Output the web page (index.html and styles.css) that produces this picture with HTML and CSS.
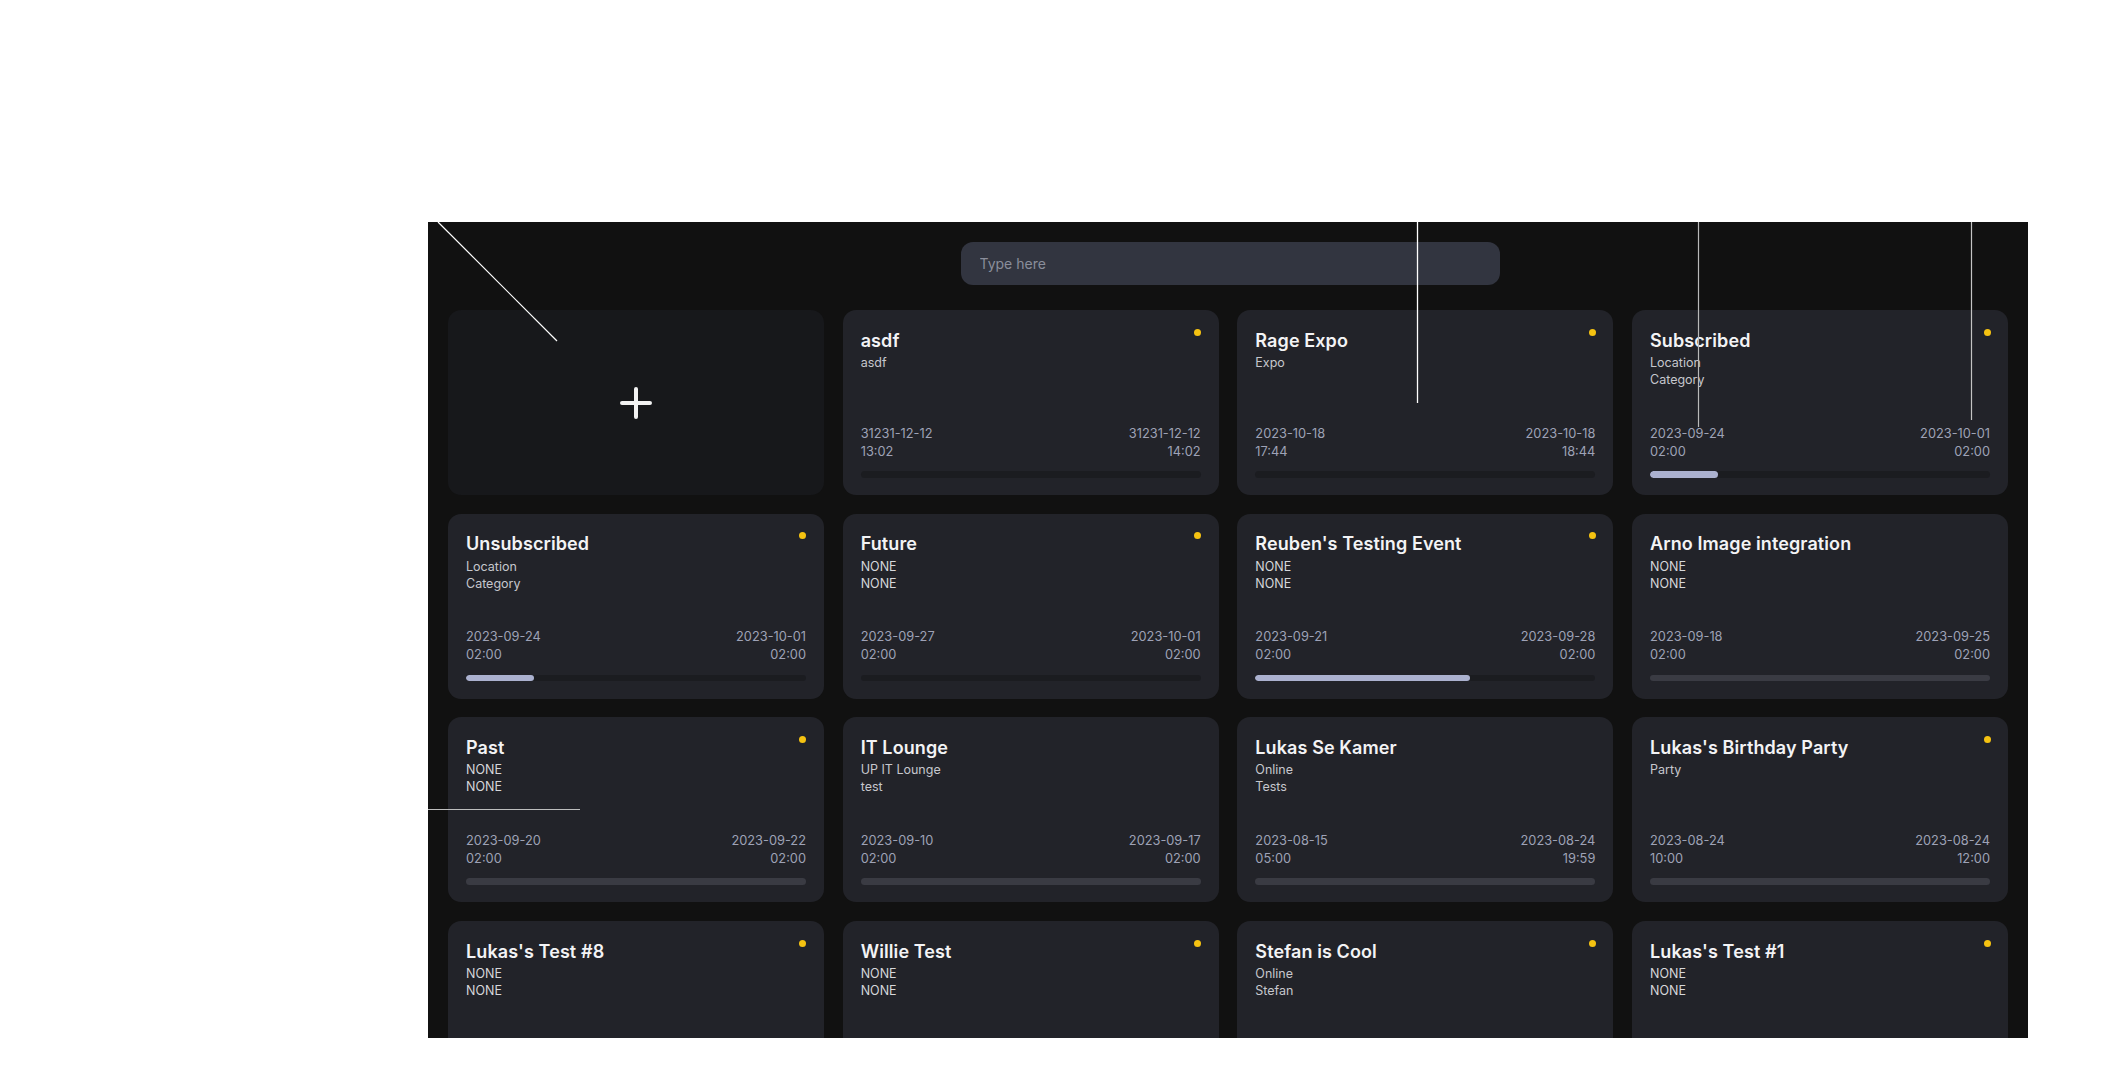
FILE: index.html
```html
<!DOCTYPE html>
<html lang="en">
<head>
<meta charset="utf-8">
<title>Events</title>
<link rel="stylesheet" href="styles.css">
</head>
<body>
<div class="page">
  <main class="panel">
    <div class="search-row">
      <input class="search" type="text" placeholder="Type here">
    </div>
    <section class="grid">
      <div class="card add-card">
        <svg class="plus" width="32" height="32" viewBox="0 0 32 32"><path d="M16 2v28M2 16h28" stroke="#f2f2f2" stroke-width="4" stroke-linecap="round" fill="none"/></svg>
      </div>

      <div class="card">
        <span class="dot"></span>
        <h3 class="title">asdf</h3>
        <div class="sub">asdf</div>
        <div class="spacer"></div>
        <div class="dates"><div>31231-12-12<br>13:02</div><div class="end">31231-12-12<br>14:02</div></div>
        <div class="bar"><div class="fill" style="width:0%"></div></div>
      </div>

      <div class="card">
        <span class="dot"></span>
        <h3 class="title">Rage Expo</h3>
        <div class="sub">Expo</div>
        <div class="spacer"></div>
        <div class="dates"><div>2023-10-18<br>17:44</div><div class="end">2023-10-18<br>18:44</div></div>
        <div class="bar"><div class="fill" style="width:0%"></div></div>
      </div>

      <div class="card">
        <span class="dot"></span>
        <h3 class="title">Subscribed</h3>
        <div class="sub">Location</div>
        <div class="sub">Category</div>
        <div class="spacer"></div>
        <div class="dates"><div>2023-09-24<br>02:00</div><div class="end">2023-10-01<br>02:00</div></div>
        <div class="bar"><div class="fill" style="width:20%"></div></div>
      </div>

      <div class="card">
        <span class="dot"></span>
        <h3 class="title">Unsubscribed</h3>
        <div class="sub">Location</div>
        <div class="sub">Category</div>
        <div class="spacer"></div>
        <div class="dates"><div>2023-09-24<br>02:00</div><div class="end">2023-10-01<br>02:00</div></div>
        <div class="bar"><div class="fill" style="width:20%"></div></div>
      </div>

      <div class="card">
        <span class="dot"></span>
        <h3 class="title">Future</h3>
        <div class="sub caps">NONE</div>
        <div class="sub caps">NONE</div>
        <div class="spacer"></div>
        <div class="dates"><div>2023-09-27<br>02:00</div><div class="end">2023-10-01<br>02:00</div></div>
        <div class="bar"><div class="fill" style="width:0%"></div></div>
      </div>

      <div class="card">
        <span class="dot"></span>
        <h3 class="title">Reuben's Testing Event</h3>
        <div class="sub caps">NONE</div>
        <div class="sub caps">NONE</div>
        <div class="spacer"></div>
        <div class="dates"><div>2023-09-21<br>02:00</div><div class="end">2023-09-28<br>02:00</div></div>
        <div class="bar"><div class="fill" style="width:63%"></div></div>
      </div>

      <div class="card">
        <h3 class="title">Arno Image integration</h3>
        <div class="sub caps">NONE</div>
        <div class="sub caps">NONE</div>
        <div class="spacer"></div>
        <div class="dates"><div>2023-09-18<br>02:00</div><div class="end">2023-09-25<br>02:00</div></div>
        <div class="bar past"></div>
      </div>

      <div class="card">
        <span class="dot"></span>
        <h3 class="title">Past</h3>
        <div class="sub caps">NONE</div>
        <div class="sub caps">NONE</div>
        <div class="spacer"></div>
        <div class="dates"><div>2023-09-20<br>02:00</div><div class="end">2023-09-22<br>02:00</div></div>
        <div class="bar past"></div>
      </div>

      <div class="card">
        <h3 class="title">IT Lounge</h3>
        <div class="sub">UP IT Lounge</div>
        <div class="sub">test</div>
        <div class="spacer"></div>
        <div class="dates"><div>2023-09-10<br>02:00</div><div class="end">2023-09-17<br>02:00</div></div>
        <div class="bar past"></div>
      </div>

      <div class="card">
        <h3 class="title">Lukas Se Kamer</h3>
        <div class="sub">Online</div>
        <div class="sub">Tests</div>
        <div class="spacer"></div>
        <div class="dates"><div>2023-08-15<br>05:00</div><div class="end">2023-08-24<br>19:59</div></div>
        <div class="bar past"></div>
      </div>

      <div class="card">
        <span class="dot"></span>
        <h3 class="title">Lukas's Birthday Party</h3>
        <div class="sub">Party</div>
        <div class="spacer"></div>
        <div class="dates"><div>2023-08-24<br>10:00</div><div class="end">2023-08-24<br>12:00</div></div>
        <div class="bar past"></div>
      </div>

      <div class="card">
        <span class="dot"></span>
        <h3 class="title">Lukas's Test #8</h3>
        <div class="sub caps">NONE</div>
        <div class="sub caps">NONE</div>
        <div class="spacer"></div>
        <div class="dates"><div>2023-09-15<br>02:00</div><div class="end">2023-09-22<br>02:00</div></div>
        <div class="bar past"></div>
      </div>

      <div class="card">
        <span class="dot"></span>
        <h3 class="title">Willie Test</h3>
        <div class="sub caps">NONE</div>
        <div class="sub caps">NONE</div>
        <div class="spacer"></div>
        <div class="dates"><div>2023-09-15<br>02:00</div><div class="end">2023-09-22<br>02:00</div></div>
        <div class="bar past"></div>
      </div>

      <div class="card">
        <span class="dot"></span>
        <h3 class="title">Stefan is Cool</h3>
        <div class="sub">Online</div>
        <div class="sub">Stefan</div>
        <div class="spacer"></div>
        <div class="dates"><div>2023-09-13<br>02:00</div><div class="end">2023-09-20<br>02:00</div></div>
        <div class="bar past"></div>
      </div>

      <div class="card">
        <span class="dot"></span>
        <h3 class="title">Lukas's Test #1</h3>
        <div class="sub caps">NONE</div>
        <div class="sub caps">NONE</div>
        <div class="spacer"></div>
        <div class="dates"><div>2023-09-13<br>02:00</div><div class="end">2023-09-20<br>02:00</div></div>
        <div class="bar past"></div>
      </div>
    </section>

    <svg class="lines" width="1600" height="816" viewBox="0 0 1600 816">
      <line x1="10" y1="0" x2="129" y2="119" stroke="#ffffff" stroke-width="1.2"/>
      <line x1="989.5" y1="0" x2="989.5" y2="181" stroke="#ffffff" stroke-width="1.3"/>
      <line x1="1270.5" y1="0" x2="1270.5" y2="205" stroke="#b9b9b9" stroke-width="1.2"/>
      <line x1="1543.5" y1="0" x2="1543.5" y2="198" stroke="#c4c4c4" stroke-width="1.2"/>
      <line x1="0" y1="587.5" x2="152" y2="587.5" stroke="#bdbdbd" stroke-width="1.2"/>
    </svg>
  </main>
</div>
</body>
</html>
```

FILE: styles.css
```css
html, body {
  margin: 0;
  padding: 0;
  background: #ffffff;
}

body {
  font-family: "Inter", "Noto Sans", "DejaVu Sans", sans-serif;
}

.page {
  padding: 222px 0 0 428px;
}

.panel {
  position: relative;
  width: 1600px;
  height: 816px;
  background: #111111;
  overflow: hidden;
  box-sizing: border-box;
  padding: 20px 20px 0 20px;
}

.search-row {
  display: flex;
  justify-content: center;
  padding-left: 4px;
  margin-bottom: 25px;
}

.search {
  width: 539px;
  height: 43px;
  box-sizing: border-box;
  border: none;
  outline: none;
  border-radius: 12px;
  background: #323540;
  padding: 0 19px;
  font-family: "Inter", "Noto Sans", sans-serif;
  font-size: 14px;
  color: #d0d2da;
}

.search::placeholder {
  color: #8a8e9b;
}

.grid {
  display: grid;
  grid-template-columns: repeat(4, 1fr);
  grid-auto-rows: 185px;
  column-gap: 18.7px;
  row-gap: 18.7px;
}

.card {
  position: relative;
  background: #222329;
  border-radius: 13px;
  padding: 18.5px 18px 17.5px 18px;
  box-sizing: border-box;
  display: flex;
  flex-direction: column;
  min-width: 0;
}

.add-card {
  background: #17181b;
  align-items: center;
  justify-content: center;
}

.plus {
  display: block;
}

.dot {
  position: absolute;
  top: 18.5px;
  right: 17.5px;
  width: 7px;
  height: 7px;
  border-radius: 50%;
  background: #f5c211;
}

.title {
  margin: 0;
  font-size: 18px;
  line-height: 24px;
  font-weight: 600;
  color: #f3f3f5;
  letter-spacing: 0.1px;
}

.sub {
  font-size: 12.5px;
  line-height: 17px;
  color: #c6c7cd;
}

.title + .sub {
  margin-top: 1.5px;
}

.sub.caps {
  color: #d6d7db;
}

.spacer {
  flex: 1;
}

.dates {
  display: flex;
  justify-content: space-between;
  font-size: 12.8px;
  line-height: 18px;
  color: #9ea2b6;
}

.dates .end {
  text-align: right;
}

.bar {
  margin-top: 10.5px;
  height: 6.5px;
  border-radius: 4px;
  background: #1b1c20;
  overflow: hidden;
}

.bar.past {
  background: #3a3b43;
}

.fill {
  height: 100%;
  border-radius: 4px;
  background: #abb1cf;
}

.lines {
  position: absolute;
  left: 0;
  top: 0;
  pointer-events: none;
}
```
